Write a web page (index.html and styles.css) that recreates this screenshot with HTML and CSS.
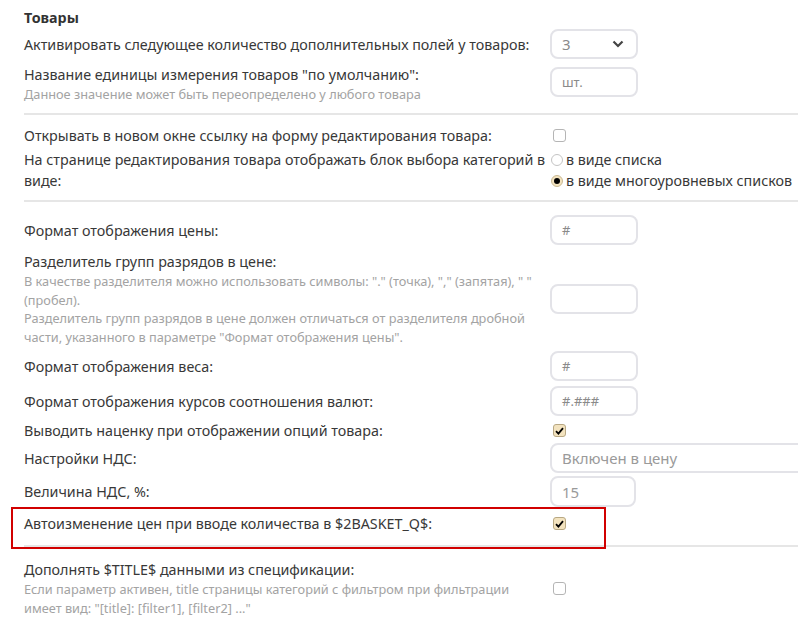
FILE: index.html
```html
<!DOCTYPE html>
<html lang="ru">
<head>
<meta charset="utf-8">
<title>Товары</title>
<link rel="stylesheet" href="styles.css">
</head>
<body>
<div class="page">
  <h2 class="title">Товары</h2>

  <div class="row r1">
    <div class="label">Активировать следующее количество дополнительных полей у товаров:</div>
    <div class="ctrl">
      <div class="field select"><span class="val">3</span>
        <svg class="chev" width="12" height="8" viewBox="0 0 12 8"><path d="M1.5 1.5 L6 6 L10.5 1.5" fill="none" stroke="#444" stroke-width="2.2"/></svg>
      </div>
    </div>
  </div>

  <div class="row r2">
    <div class="label">Название единицы измерения товаров "по умолчанию":
      <div class="hint">Данное значение может быть переопределено у любого товара</div>
    </div>
    <div class="ctrl up"><div class="field small"><span class="val">шт.</span></div></div>
  </div>

  <div class="divider d1"></div>

  <div class="row r3">
    <div class="label">Открывать в новом окне ссылку на форму редактирования товара:</div>
    <div class="ctrl"><span class="check"></span></div>
  </div>

  <div class="row r4">
    <div class="label nowrap">На странице редактирования товара отображать блок выбора категорий в<br>виде:</div>
    <div class="ctrl radios">
      <div class="opt"><span class="radio"></span>в виде списка</div>
      <div class="opt"><span class="radio on"></span>в виде многоуровневых списков</div>
    </div>
  </div>

  <div class="divider d2"></div>

  <div class="row r5">
    <div class="label">Формат отображения цены:</div>
    <div class="ctrl"><div class="field small"><span class="val">#</span></div></div>
  </div>

  <div class="row r6">
    <div class="label">Разделитель групп разрядов в цене:
      <div class="hint nowrap">В качестве разделителя можно использовать символы: "." (точка), "," (запятая), " "<br>(пробел).<br>Разделитель групп разрядов в цене должен отличаться от разделителя дробной<br>части, указанного в параметре "Формат отображения цены".</div>
    </div>
    <div class="ctrl"><div class="field small"></div></div>
  </div>

  <div class="row r7">
    <div class="label">Формат отображения веса:</div>
    <div class="ctrl"><div class="field small"><span class="val">#</span></div></div>
  </div>

  <div class="row r8">
    <div class="label">Формат отображения курсов соотношения валют:</div>
    <div class="ctrl"><div class="field small"><span class="val">#.###</span></div></div>
  </div>

  <div class="row r9">
    <div class="label">Выводить наценку при отображении опций товара:</div>
    <div class="ctrl"><span class="check on"><svg width="9" height="8" viewBox="0 0 9 8"><path d="M1 4.2 L3.4 6.6 L8 1.2" fill="none" stroke="#000" stroke-width="1.8"/></svg></span></div>
  </div>

  <div class="row r10">
    <div class="label">Настройки НДС:</div>
    <div class="ctrl"><div class="field wide"><span class="val big">Включен в цену</span></div></div>
  </div>

  <div class="row r11">
    <div class="label">Величина НДС, %:</div>
    <div class="ctrl"><div class="field num"><span class="val big">15</span></div></div>
  </div>

  <div class="marked">
    <div class="row r12">
      <div class="label">Автоизменение цен при вводе количества в $2BASKET_Q$:</div>
      <div class="ctrl"><span class="check on"><svg width="9" height="8" viewBox="0 0 9 8"><path d="M1 4.2 L3.4 6.6 L8 1.2" fill="none" stroke="#000" stroke-width="1.8"/></svg></span></div>
    </div>
    <div class="divider d3"></div>
  </div>

  <div class="row r13">
    <div class="label">Дополнять $TITLE$ данными из спецификации:
      <div class="hint nowrap">Если параметр активен, title страницы категорий с фильтром при фильтрации<br>имеет вид: "[title]: [filter1], [filter2] ..."</div>
    </div>
    <div class="ctrl"><span class="check"></span></div>
  </div>
</div>
</body>
</html>
```

FILE: styles.css
```css
html, body {
  margin: 0;
  padding: 0;
  background: #fff;
  overflow: hidden;
}
body {
  font-family: "Noto Sans", "Open Sans", sans-serif;
  font-size: 14.3px;
  color: #383838;
}
.page {
  padding-left: 24px;
  width: 774px;
  overflow: hidden;
}
.title {
  margin: 7px 0 0;
  font-size: 14.3px;
  font-weight: 700;
  line-height: 21px;
  color: #333;
}
.row {
  display: grid;
  grid-template-columns: 526px 1fr;
  align-items: center;
}
.label {
  line-height: 21px;
}
.nowrap { white-space: nowrap; }
.hint {
  font-size: 12.75px;
  line-height: 18.5px;
  color: #a3a3a3;
}
.r2 .hint { line-height: 18px; }
.ctrl {
  display: flex;
  flex-direction: column;
  align-items: flex-start;
}
.ctrl.up { margin-top: -3px; }
.field {
  box-sizing: border-box;
  height: 30px;
  width: 88px;
  border: 2px solid #e3e3e8;
  border-radius: 8px;
  display: flex;
  align-items: center;
  padding-left: 10px;
  color: #8a8a8a;
  font-size: 13px;
}
.field .val.big { font-size: 15px; color: #9a9a9a; }
.field.select { justify-content: space-between; padding-right: 12px; font-size: 15px; }
.field.wide { width: 300px; height: 30px; }
.field.num { width: 86px; height: 31px; }
.chev { display: block; }

.check {
  box-sizing: border-box;
  width: 13px;
  height: 13px;
  margin-left: 3px;
  border: 1px solid #b5b5b5;
  border-radius: 3px;
  background: #fff;
  display: flex;
  align-items: center;
  justify-content: center;
}
.check.on {
  background: #f3e3bf;
  border-color: #b8a883;
}
.radios .opt {
  display: flex;
  align-items: center;
  line-height: 21px;
  white-space: nowrap;
  color: #383838;
}
.radio {
  box-sizing: border-box;
  width: 12px;
  height: 12px;
  margin: 0 3px 0 1px;
  border: 1px solid #c4c4c4;
  border-radius: 50%;
  background: #fff;
  display: flex;
  align-items: center;
  justify-content: center;
}
.radio.on {
  background: #f3e3bf;
  border-color: #c9b994;
}
.radio.on::after {
  content: "";
  width: 6px;
  height: 6px;
  border-radius: 50%;
  background: #000;
}
.divider {
  height: 2px;
  background: #e6e6e6;
}
.r1 { margin-top: 1px; }
.r2 { margin-top: 5px; }
.d1 { margin-top: 10px; }
.r3 { margin-top: 10px; }
.r4 { margin-top: 3px; }
.d2 { margin-top: 9px; }
.r5 { margin-top: 13px; }
.r6 { margin-top: 6px; }
.r7 { margin-top: 5px; }
.r8 { margin-top: 5px; }
.r9 { margin-top: 4px; }
.r10 { margin-top: 2px; }
.r11 { margin-top: 3px; }
.marked {
  position: relative;
  margin-top: 4px;
}
.marked::before {
  content: "";
  position: absolute;
  left: -13px;
  top: -4px;
  width: 595px;
  height: 42px;
  box-sizing: border-box;
  border: 2px solid #d10000;
  pointer-events: none;
}
.r12 { padding-top: 2px; }
.d3 { margin-top: 11px; }
.r13 { margin-top: 12px; }
```
